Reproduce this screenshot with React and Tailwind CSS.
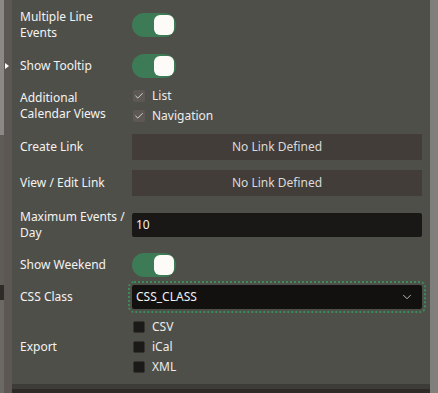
import React from 'react';
import { ChevronDown, Check } from 'lucide-react';

function Toggle() {
  return (
    <div className="w-[44px] h-[24px] rounded-full bg-[#3c7b55] flex items-center justify-end pr-[2px]">
      <div className="w-[20px] h-[20px] rounded-[6px] bg-[#fcfbf8]" />
    </div>
  );
}

function Box({ checked, label }) {
  return (
    <div className="flex items-center gap-[7px] h-[20px]">
      {checked ? (
        <div className="w-[12px] h-[12px] rounded-[2px] bg-[#5d5853] flex items-center justify-center">
          <Check size={10} strokeWidth={2} className="text-[#ececec]" />
        </div>
      ) : (
        <div className="w-[12px] h-[12px] rounded-[2px] bg-[#1c1a18] border border-[#34312e]" />
      )}
      <span className="text-[12px] text-[#ececec]">{label}</span>
    </div>
  );
}

function Row({ h, label, children }) {
  return (
    <div className={`flex items-center ${h}`}>
      <div className="w-[112px] shrink-0 text-[12px] leading-[16px] text-[#f3f3f3] whitespace-nowrap">{label}</div>
      <div className="flex-1">{children}</div>
    </div>
  );
}

export default function App() {
  return (
    <div className="w-[438px] h-[393px] flex overflow-hidden bg-[#4f4f49]" style={{ fontFamily: '"Noto Sans", "Open Sans", sans-serif' }}>
      {/* left edge strip */}
      <div className="w-[4px] h-full flex flex-col shrink-0">
        <div className="h-[135px] bg-[#8b8885]" />
        <div className="h-[150px] bg-[#5f5b57]" />
        <div className="h-[15px] bg-[#2d2a27]" />
        <div className="flex-1 bg-[#6c6965]" />
      </div>
      <div className="w-[8px] h-full bg-[#5c5752] shrink-0 flex flex-col">
        <div className="h-[63px]" />
        <div className="pl-[1px]">
          <div className="w-0 h-0 border-y-[3.5px] border-y-transparent border-l-[4px] border-l-white" />
        </div>
      </div>

      {/* main form */}
      <div className="flex-1 flex flex-col">
        <div className="flex-1 pl-2 pr-2 pt-[5px] flex flex-col">
          <Row h="h-[40px]" label={<>Multiple Line<br />Events</>}>
            <Toggle />
          </Row>
          <Row h="h-[41px]" label="Show Tooltip">
            <Toggle />
          </Row>
          <Row h="h-[40px]" label={<>Additional<br />Calendar Views</>}>
            <div className="flex flex-col pl-[1px]">
              <Box checked label="List" />
              <Box checked label="Navigation" />
            </div>
          </Row>
          <Row h="h-[42px]" label="Create Link">
            <div className="h-[26px] bg-[#423d38] flex items-center justify-center text-[12px] text-[#dadada]">No Link Defined</div>
          </Row>
          <Row h="h-[30px]" label="View / Edit Link">
            <div className="h-[26px] bg-[#423d38] flex items-center justify-center text-[12px] text-[#dadada]">No Link Defined</div>
          </Row>
          <Row h="h-[54px]" label={<>Maximum Events /<br />Day</>}>
            <div className="h-[24px] bg-[#1a1816] rounded-[2px] flex items-center pl-[4px] text-[12px] text-[#f3f3f3]">10</div>
          </Row>
          <Row h="h-[26px]" label="Show Weekend">
            <Toggle />
          </Row>
          <Row h="h-[38px]" label="CSS Class">
            <div className="h-[24px] bg-[#121110] rounded-[2px] flex items-center justify-between pl-[4px] pr-[8px] text-[12px] text-[#f3f3f3] outline-2 outline-dotted outline-[#3d8a5a] outline-offset-2">
              <span>CSS_CLASS</span>
              <ChevronDown size={14} strokeWidth={1.5} className="text-[#d0d0d0]" />
            </div>
          </Row>
          <Row h="h-[62px]" label="Export">
            <div className="flex flex-col pl-[1px]">
              <Box label="CSV" />
              <Box label="iCal" />
              <Box label="XML" />
            </div>
          </Row>
        </div>
        <div className="h-[5px] bg-[#3e3c38] shrink-0" />
        <div className="h-[4px] bg-[#2e2a27] shrink-0" />
      </div>

      {/* right scrollbar */}
      <div className="w-[8px] h-full bg-[#807f7c] shrink-0" />
    </div>
  );
}
